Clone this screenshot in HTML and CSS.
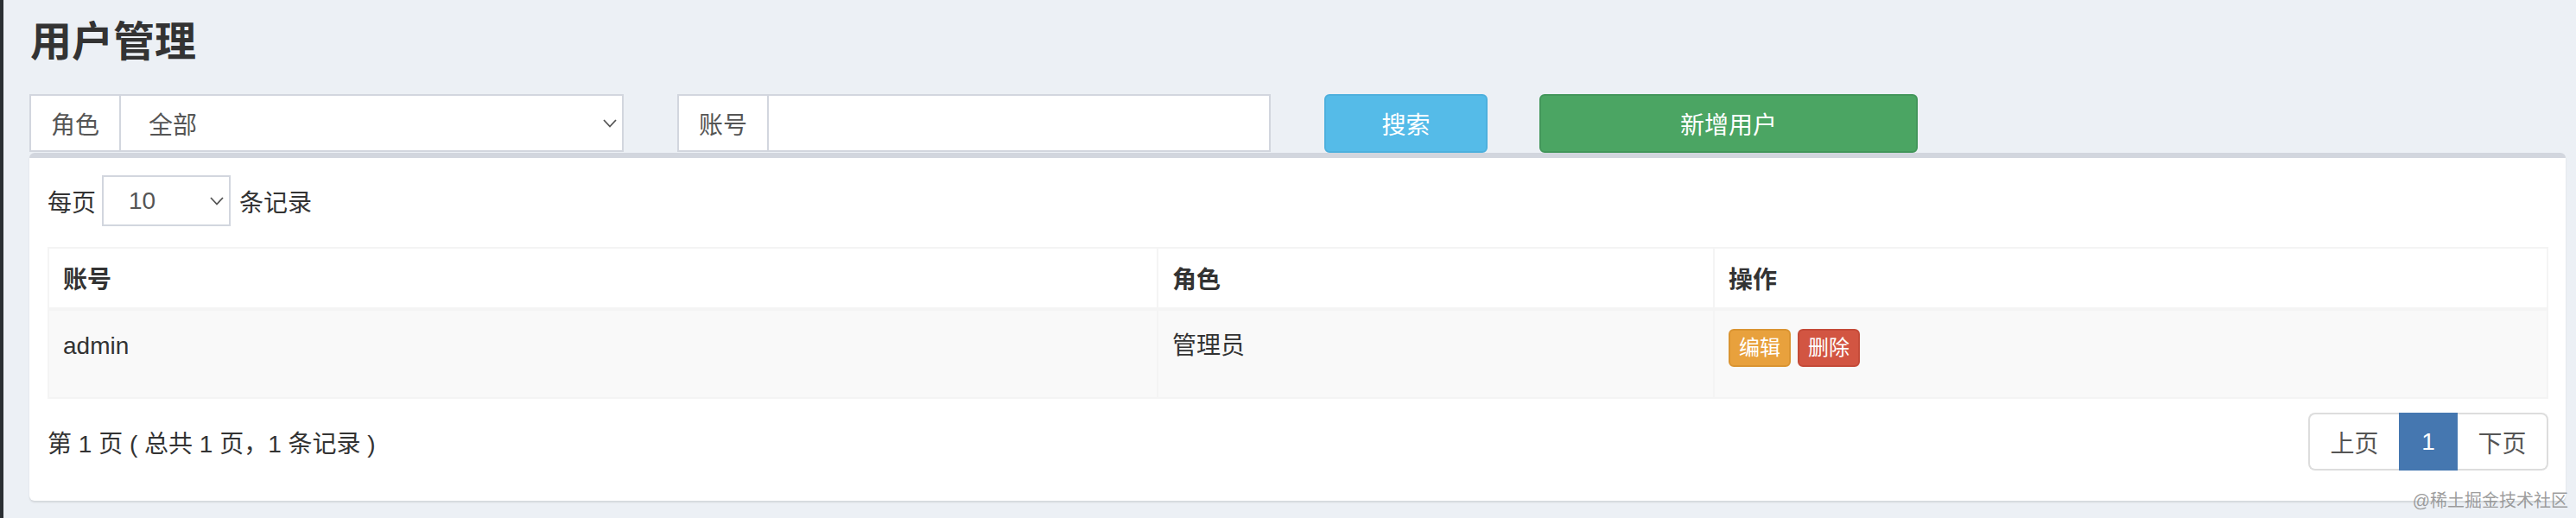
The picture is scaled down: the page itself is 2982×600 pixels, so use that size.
FILE: index.html
```html
<!DOCTYPE html>
<html lang="zh-CN">
<head>
<meta charset="utf-8">
<title>用户管理</title>
<link rel="stylesheet" href="styles.css">
</head>
<body>
<div class="content">
  <h1 class="page-title">用户管理</h1>
  <div class="filters">
    <div class="group group-role">
      <span class="addon">角色</span>
      <div class="field field-select">
        <span>全部</span>
        <svg class="chevron" width="16" height="10" viewBox="0 0 16 10"><path d="M1 1 L8 8.5 L15 1" fill="none" stroke="#555" stroke-width="1.8"/></svg>
      </div>
    </div>
    <div class="group group-account">
      <span class="addon">账号</span>
      <div class="field"></div>
    </div>
    <button class="btn btn-search">搜索</button>
    <button class="btn btn-add">新增用户</button>
  </div>

  <div class="box">
    <div class="length">
      <span>每页</span>
      <div class="len-select">
        <span>10</span>
        <svg class="chevron" width="16" height="10" viewBox="0 0 16 10"><path d="M1 1 L8 8.5 L15 1" fill="none" stroke="#555" stroke-width="1.8"/></svg>
      </div>
      <span>条记录</span>
    </div>

    <table class="data">
      <colgroup>
        <col class="c1"><col class="c2"><col class="c3">
      </colgroup>
      <thead>
        <tr><th>账号</th><th>角色</th><th>操作</th></tr>
      </thead>
      <tbody>
        <tr>
          <td>admin</td>
          <td>管理员</td>
          <td><span class="actions"><span class="act act-edit">编辑</span><span class="act act-del">删除</span></span></td>
        </tr>
      </tbody>
    </table>

    <div class="footer">
      <span class="info">第 1 页 ( 总共 1 页，1 条记录 )</span>
      <div class="pager">
        <span class="pg pg-prev">上页</span>
        <span class="pg pg-active">1</span>
        <span class="pg pg-next">下页</span>
      </div>
    </div>
  </div>
</div>
<div class="watermark">@稀土掘金技术社区</div>
</body>
</html>
```
FILE: styles.css
```css
* { box-sizing: border-box; }

html {
  height: 100%;
  overflow: hidden;
}

body {
  margin: 0;
  height: 100%;
  position: relative;
  background: #ecf0f5;
  border-left: 4px solid #2b2f33;
  font-family: "Liberation Sans", "Noto Sans CJK SC", sans-serif;
  font-size: 28px;
  color: #333;
  overflow: hidden;
}

.content {
  padding: 0 12px 0 30px;
}

.page-title {
  margin: 0;
  padding: 22px 0 33px 1px;
  font-size: 48px;
  line-height: 54px;
  font-weight: bold;
  color: #333;
}

.filters {
  display: flex;
  align-items: flex-start;
  height: 68px;
}

.group {
  display: flex;
  height: 67px;
}

.group-role { width: 688px; }
.group-account { width: 687px; margin-left: 62px; }

.addon {
  width: 106px;
  flex: none;
  border: 2px solid #d2d6de;
  background: #fff;
  color: #555;
  display: flex;
  align-items: center;
  justify-content: center;
}

.field {
  flex: 1;
  border: 2px solid #d2d6de;
  border-left: 0;
  background: #fff;
  display: flex;
  align-items: center;
  padding: 0 6px 0 32px;
  color: #555;
}

.chevron { margin-left: auto; display: block; }

.btn {
  height: 68px;
  border: 2px solid;
  border-radius: 6px;
  color: #fff;
  font-family: inherit;
  font-size: 28px;
  padding: 0;
}

.btn-search {
  width: 189px;
  margin-left: 62px;
  background: #55bbe8;
  border-color: #4db0dd;
}

.btn-add {
  width: 438px;
  margin-left: 60px;
  background: #4ba563;
  border-color: #42965a;
}

.box {
  background: #fff;
  border-top: 6px solid #d2d6de;
  border-radius: 6px;
  box-shadow: 0 2px 2px rgba(0, 0, 0, 0.1);
  padding: 20px 20px 35px 21px;
}

.length {
  display: flex;
  align-items: center;
  height: 59px;
}

.len-select {
  width: 149px;
  height: 59px;
  margin: 0 10px 0 7px;
  border: 2px solid #d2d6de;
  display: flex;
  align-items: center;
  padding: 0 6px 0 29px;
  color: #555;
}

.data {
  width: 100%;
  margin-top: 24px;
  border-collapse: collapse;
}

.c1 { width: 1284px; }
.c2 { width: 644px; }

.data th,
.data td {
  border: 2px solid #f4f4f4;
  padding: 0 16px;
  text-align: left;
}

.data th {
  height: 71px;
  font-weight: bold;
  border-bottom-width: 4px;
  background: #fff;
  vertical-align: middle;
}

.data td {
  height: 103px;
  background: #f9f9f9;
  vertical-align: top;
  padding-top: 13px;
  line-height: 56px;
}

.actions {
  display: inline-flex;
  gap: 8px;
  vertical-align: middle;
}

.act {
  display: inline-flex;
  align-items: center;
  height: 44px;
  padding: 0 10px;
  border: 2px solid;
  border-radius: 6px;
  font-size: 24px;
  line-height: 1;
  color: #fff;
}

.act-edit { background: #e8a13d; border-color: #da9431; }
.act-del { background: #d25542; border-color: #c44a38; }

.footer {
  display: flex;
  justify-content: space-between;
  align-items: center;
  margin-top: 16px;
  height: 67px;
}

.info { color: #333; }

.pager {
  display: flex;
  height: 67px;
}

.pg {
  display: flex;
  align-items: center;
  justify-content: center;
  border: 2px solid #ddd;
  color: #555;
  background: #fff;
}

.pg-prev {
  width: 105px;
  border-radius: 8px 0 0 8px;
  border-right: 0;
}

.pg-active {
  width: 68px;
  background: #4577b0;
  border-color: #4577b0;
  color: #fff;
}

.pg-next {
  width: 105px;
  border-radius: 0 8px 8px 0;
  border-left: 0;
}

.watermark {
  position: absolute;
  right: 9px;
  bottom: 7px;
  font-size: 20px;
  color: rgba(140, 140, 140, 0.85);
}
```
